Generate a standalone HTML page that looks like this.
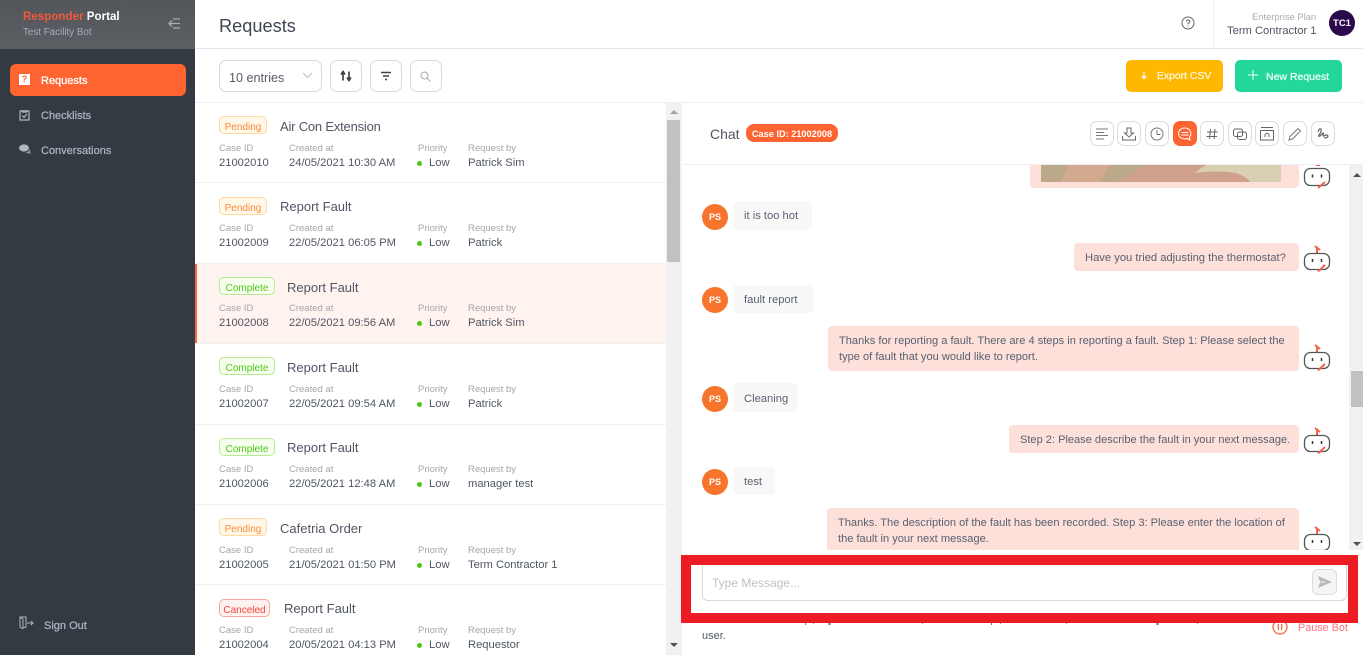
<!DOCTYPE html>
<html><head><meta charset="utf-8"><style>
html,body{margin:0;padding:0;width:1363px;height:655px;overflow:hidden;background:#fff;font-family:"Liberation Sans",sans-serif;color:#4a5160}
.a{position:absolute}
.t{position:absolute;white-space:nowrap;line-height:14px}
.lb{font-size:9.5px;color:#a2a6ad;margin-top:1px}
.v{font-size:11.2px;color:#4f5663;margin-top:1px}
.ti{font-size:13px;color:#4f5663}
.bd{position:absolute;left:219px;height:16px;margin-top:-1px;border-radius:5px;font-size:10px;line-height:21px;text-align:center;box-sizing:content-box}
.p{width:46px;background:#fff7e8;border:1px solid #ffd9a0;color:#fa8c3c}
.c{width:54px;background:#f6ffed;border:1px solid #b7eb8f;color:#52c41a}
.x{width:49px;background:#fff1f0;border:1px solid #ffa39e;color:#f5453d}
.dot{position:absolute;left:417px;width:5px;height:5px;margin-top:1px;border-radius:50%;background:#52c41a}
.bt{position:absolute;box-sizing:border-box;border:1px solid #d9d9d9;border-radius:7px;background:#fff}
.ib{position:absolute;top:121px;width:24px;height:25px;box-sizing:border-box;border:1px solid #dcdcdc;border-radius:7px;background:#fff}
.ib svg{position:absolute;left:3px;top:4px}
.m{position:absolute;box-sizing:border-box;font-size:11.2px;line-height:16px;border-radius:4px;color:#5a6170;white-space:nowrap}
.l{background:#f8f8f8}.r{background:#fde0da}
.av{position:absolute;left:702px;width:26px;height:26px;border-radius:50%;background:#f7742c;color:#fff;font-size:9px;font-weight:bold;line-height:27px;text-align:center}
.nav{font-size:11px;color:#a9b4c0;-webkit-text-stroke:.25px #a9b4c0}
</style></head><body>
<!-- sidebar -->
<div class="a" style="left:0;top:0;width:195px;height:655px;background:#343a42"></div>
<div class="a" style="left:0;top:0;width:195px;height:49px;background:linear-gradient(#53565b,#5b5e63)"></div>
<div class="t" style="left:23px;top:10px;font-size:11.6px;font-weight:bold;color:#f2583a">Responder <span style="color:#fff">Portal</span></div>
<div class="t" style="left:23px;top:26px;font-size:9.8px;color:#a3adb8">Test Facility Bot</div>
<svg class="a" style="left:167px;top:17px" width="14" height="13" fill="none" stroke="#a8adb3" stroke-width="1.3"><path d="M2 6.5H13M5 3.5L2 6.5L5 9.5M6 2H13M6 11H13"/></svg>
<div class="a" style="left:10px;top:64px;width:176px;height:32px;border-radius:6px;background:#fe6431"></div>
<div class="a" style="left:19px;top:74px;width:11px;height:11px;background:#fff;color:#fe6431;font-size:9px;font-weight:bold;line-height:11px;text-align:center">?</div>
<div class="t" style="left:41px;top:74px;font-size:11px;color:#fff;-webkit-text-stroke:.3px #fff">Requests</div>
<svg class="a" style="left:19px;top:109px" width="11" height="12" fill="none" stroke="#b0b6bd" stroke-width="1.2"><path d="M1 2H10V11H1ZM3.5 1V3H7.5V1M3 6.5L5 8.5L8 5"/></svg>
<div class="t nav" style="left:41px;top:109px">Checklists</div>
<svg class="a" style="left:19px;top:144px" width="12" height="11"><ellipse cx="5" cy="4" rx="5" ry="3.6" fill="#b0b6bd"/><path d="M6 8.5Q10 8 11 5L11.5 10Z" fill="#8f959c"/></svg>
<div class="t nav" style="left:41px;top:144px">Conversations</div>
<svg class="a" style="left:19px;top:616px" width="16" height="13" fill="none" stroke="#b0b6bd" stroke-width="1"><path d="M1 1H7V11L3 12.500L1 11ZM1 1L4 3V12M8 7H14M12 5L14 7L12 9"/></svg>
<div class="t nav" style="left:44px;top:619px">Sign Out</div>

<!-- header -->
<div class="t" style="left:219px;top:16px;font-size:18.2px;line-height:20px;color:#414854">Requests</div>
<div class="a" style="left:195px;top:48px;width:1168px;height:1px;background:#e6e6ee"></div>
<div class="a" style="left:1213px;top:0;width:1px;height:48px;background:#eeeef3"></div>
<svg class="a" style="left:1181px;top:16px" width="14" height="14" fill="none" stroke="#666" stroke-width="1"><circle cx="7" cy="7" r="6"/><path d="M5.300 5.500Q5.500 4 7 4Q8.800 4 8.800 5.500Q8.800 6.500 7 7.500V8.300M7 9.500V10.500"/></svg>
<div class="t" style="left:1252px;top:10px;font-size:9.4px;color:#a8abb3">Enterprise Plan</div>
<div class="t" style="left:1227px;top:24px;font-size:11.2px;color:#4f5663">Term Contractor 1</div>
<div class="a" style="left:1329px;top:10px;width:26px;height:26px;border-radius:50%;background:#2a0a4a;color:#fff;font-size:9.500px;font-weight:bold;line-height:27px;text-align:center">TC1</div>

<!-- toolbar -->
<div class="bt" style="left:219px;top:60px;width:103px;height:32px"></div>
<div class="t" style="left:229px;top:71px;font-size:12.6px;color:#555c68">10 entries</div>
<svg class="a" style="left:302px;top:72px" width="11" height="7" fill="none" stroke="#bbb" stroke-width="1"><path d="M1 1L5.500 5.500L10 1"/></svg>
<div class="bt" style="left:330px;top:60px;width:32px;height:32px"></div>
<svg class="a" style="left:340px;top:70px" width="12" height="12" fill="none" stroke="#444" stroke-width="1.700"><path d="M3 10.500V2M1 4.500L3 1.500L5 4.500M9 1.500V10M7 7.500L9 10.500L11 7.500"/></svg>
<div class="bt" style="left:370px;top:60px;width:32px;height:32px"></div>
<svg class="a" style="left:380px;top:71px" width="12" height="10" fill="none" stroke="#444" stroke-width="1.500"><path d="M1 1.500H11M3 5H9M5 8.500H7"/></svg>
<div class="bt" style="left:410px;top:60px;width:32px;height:32px"></div>
<svg class="a" style="left:420px;top:71px" width="11" height="11" fill="none" stroke="#aaa" stroke-width="1"><circle cx="4.500" cy="4.500" r="3.500"/><path d="M7 7L10.500 10.500"/></svg>
<div class="a" style="left:1126px;top:60px;width:97px;height:32px;border-radius:5px;background:#ffb800"></div>
<svg class="a" style="left:1140px;top:71px" width="8" height="9" fill="none" stroke="#fff" stroke-width="1.200"><path d="M4 1V7.500M1.500 5L4 7.500L6.500 5"/></svg>
<div class="t" style="left:1157px;top:70px;font-size:10.4px;color:#fff7dd;-webkit-text-stroke:.25px #fff7dd">Export CSV</div>
<div class="a" style="left:1235px;top:60px;width:107px;height:32px;border-radius:5px;background:#23d69b"></div>
<svg class="a" style="left:1248px;top:70px" width="10" height="10" stroke="#fff" stroke-width="1"><path d="M5 0V10M0 5H10"/></svg>
<div class="t" style="left:1266px;top:70px;font-size:10.5px;color:#eafff7;-webkit-text-stroke:.25px #eafff7">New Request</div>
<div class="a" style="left:195px;top:102px;width:1168px;height:1px;background:#eeeef4"></div>

<!-- list -->
<div class="a" style="left:195px;top:264px;width:471px;height:80px;background:#fff3f0"></div>
<div class="a" style="left:195px;top:264px;width:2px;height:80px;background:#ff6a3c"></div>
<div class="a" style="left:195px;top:182px;width:471px;height:1px;background:#f0f0f0"></div>
<div class="a" style="left:195px;top:263px;width:471px;height:1px;background:#f0f0f0"></div>
<div class="a" style="left:195px;top:343px;width:471px;height:1px;background:#f0f0f0"></div>
<div class="a" style="left:195px;top:424px;width:471px;height:1px;background:#f0f0f0"></div>
<div class="a" style="left:195px;top:504px;width:471px;height:1px;background:#f0f0f0"></div>
<div class="a" style="left:195px;top:584px;width:471px;height:1px;background:#f0f0f0"></div>

<div class="bd p" style="top:117px">Pending</div><div class="t ti" style="left:280px;top:120px;letter-spacing:-.2px">Air Con Extension</div>
<div class="t lb" style="left:219px;top:141px">Case ID</div><div class="t lb" style="left:289px;top:141px">Created at</div><div class="t lb" style="left:418px;top:141px">Priority</div><div class="t lb" style="left:468px;top:141px">Request by</div>
<div class="t v" style="left:219px;top:155px">21002010</div><div class="t v" style="left:289px;top:155px">24/05/2021 10:30 AM</div><div class="dot" style="top:160px"></div><div class="t v" style="left:429px;top:155px">Low</div><div class="t v" style="left:468px;top:155px">Patrick Sim</div>

<div class="bd p" style="top:198px">Pending</div><div class="t ti" style="left:280px;top:200px">Report Fault</div>
<div class="t lb" style="left:219px;top:221px">Case ID</div><div class="t lb" style="left:289px;top:221px">Created at</div><div class="t lb" style="left:418px;top:221px">Priority</div><div class="t lb" style="left:468px;top:221px">Request by</div>
<div class="t v" style="left:219px;top:235px">21002009</div><div class="t v" style="left:289px;top:235px">22/05/2021 06:05 PM</div><div class="dot" style="top:240px"></div><div class="t v" style="left:429px;top:235px">Low</div><div class="t v" style="left:468px;top:235px">Patrick</div>

<div class="bd c" style="top:278px">Complete</div><div class="t ti" style="left:287px;top:281px">Report Fault</div>
<div class="t lb" style="left:219px;top:301px">Case ID</div><div class="t lb" style="left:289px;top:301px">Created at</div><div class="t lb" style="left:418px;top:301px">Priority</div><div class="t lb" style="left:468px;top:301px">Request by</div>
<div class="t v" style="left:219px;top:315px">21002008</div><div class="t v" style="left:289px;top:315px">22/05/2021 09:56 AM</div><div class="dot" style="top:320px"></div><div class="t v" style="left:429px;top:315px">Low</div><div class="t v" style="left:468px;top:315px">Patrick Sim</div>

<div class="bd c" style="top:358px">Complete</div><div class="t ti" style="left:287px;top:361px">Report Fault</div>
<div class="t lb" style="left:219px;top:382px">Case ID</div><div class="t lb" style="left:289px;top:382px">Created at</div><div class="t lb" style="left:418px;top:382px">Priority</div><div class="t lb" style="left:468px;top:382px">Request by</div>
<div class="t v" style="left:219px;top:396px">21002007</div><div class="t v" style="left:289px;top:396px">22/05/2021 09:54 AM</div><div class="dot" style="top:401px"></div><div class="t v" style="left:429px;top:396px">Low</div><div class="t v" style="left:468px;top:396px">Patrick</div>

<div class="bd c" style="top:439px">Complete</div><div class="t ti" style="left:287px;top:441px">Report Fault</div>
<div class="t lb" style="left:219px;top:462px">Case ID</div><div class="t lb" style="left:289px;top:462px">Created at</div><div class="t lb" style="left:418px;top:462px">Priority</div><div class="t lb" style="left:468px;top:462px">Request by</div>
<div class="t v" style="left:219px;top:476px">21002006</div><div class="t v" style="left:289px;top:476px">22/05/2021 12:48 AM</div><div class="dot" style="top:481px"></div><div class="t v" style="left:429px;top:476px">Low</div><div class="t v" style="left:468px;top:476px">manager test</div>

<div class="bd p" style="top:519px">Pending</div><div class="t ti" style="left:280px;top:522px">Cafetria Order</div>
<div class="t lb" style="left:219px;top:543px">Case ID</div><div class="t lb" style="left:289px;top:543px">Created at</div><div class="t lb" style="left:418px;top:543px">Priority</div><div class="t lb" style="left:468px;top:543px">Request by</div>
<div class="t v" style="left:219px;top:557px">21002005</div><div class="t v" style="left:289px;top:557px">21/05/2021 01:50 PM</div><div class="dot" style="top:562px"></div><div class="t v" style="left:429px;top:557px">Low</div><div class="t v" style="left:468px;top:557px">Term Contractor 1</div>

<div class="bd x" style="top:600px">Canceled</div><div class="t ti" style="left:284px;top:602px">Report Fault</div>
<div class="t lb" style="left:219px;top:623px">Case ID</div><div class="t lb" style="left:289px;top:623px">Created at</div><div class="t lb" style="left:418px;top:623px">Priority</div><div class="t lb" style="left:468px;top:623px">Request by</div>
<div class="t v" style="left:219px;top:637px">21002004</div><div class="t v" style="left:289px;top:637px">20/05/2021 04:13 PM</div><div class="dot" style="top:642px"></div><div class="t v" style="left:429px;top:637px">Low</div><div class="t v" style="left:468px;top:637px">Requestor</div>

<!-- list scrollbar -->
<div class="a" style="left:666px;top:103px;width:16px;height:552px;background:#f1f1f1"></div>
<div class="a" style="left:667px;top:120px;width:13px;height:142px;background:#c1c1c1"></div>
<div class="a" style="left:670px;top:110px;width:0;height:0;border-left:4px solid transparent;border-right:4px solid transparent;border-bottom:4px solid #a3a3a3"></div>
<div class="a" style="left:670px;top:643px;width:0;height:0;border-left:4px solid transparent;border-right:4px solid transparent;border-top:4px solid #505050"></div>

<!-- chat header -->
<div class="t" style="left:710px;top:126px;font-size:14px;line-height:16px;color:#4f5663">Chat</div>
<div class="a" style="left:746px;top:124px;width:92px;height:18px;border-radius:8px;background:#fe6431;color:#fff;font-size:9.2px;font-weight:bold;line-height:20px;text-align:center">Case ID: 21002008</div>
<div class="a" style="left:683px;top:164px;width:680px;height:1px;background:#eeeef4"></div>

<div class="ib" style="left:1090px"><svg width="16" height="16" fill="none" stroke="#777" stroke-width="1"><path d="M2 3H14M2 6.500H10M2 9.500H14M2 13H10"/></svg></div>
<div class="ib" style="left:1117px"><svg width="16" height="16" fill="none" stroke="#666" stroke-width="1"><path d="M6 2H10V7H12.500L8 11L3.500 7H6ZM1.500 10V14H14.500V10"/></svg></div>
<div class="ib" style="left:1145px"><svg width="16" height="16" fill="none" stroke="#777" stroke-width="1"><circle cx="8" cy="8" r="6"/><path d="M8 4V8.500H11.500"/></svg></div>
<div class="ib" style="left:1173px;background:#fe6431;border-color:#fe6431"><svg width="16" height="16" fill="none" stroke="#fff" stroke-width="1"><path d="M8 2A6 5.500 0 1 0 10 12.500L13 14L12.500 11A6 5.500 0 0 0 8 2ZM4.500 6.500H11.500M4.500 9H11.500"/></svg></div>
<div class="ib" style="left:1200px"><svg width="16" height="16" fill="none" stroke="#666" stroke-width="1"><path d="M6.500 3L5.500 13M11 3L10 13M3 6H13.500M2.500 10.500H13"/></svg></div>
<div class="ib" style="left:1228px"><svg width="16" height="16" fill="none" stroke="#666" stroke-width="1"><rect x="1.500" y="3" width="9" height="7.500" rx="2"/><rect x="5.500" y="6" width="9" height="7.500" rx="2"/></svg></div>
<div class="ib" style="left:1255px"><svg width="16" height="16" fill="none" stroke="#666" stroke-width="1"><path d="M2 1.500H14M1.500 4.500H14.500V14H1.500ZM6 11V8.500Q8 6 10 8.500V11"/></svg></div>
<div class="ib" style="left:1283px"><svg width="16" height="16" fill="none" stroke="#777" stroke-width="1"><path d="M2 14L3 10.500L11 2.500L13.500 5L5.500 13Z"/></svg></div>
<div class="ib" style="left:1311px"><svg width="16" height="16" fill="none" stroke="#555" stroke-width="1.100"><path d="M3 6Q4 2 6 3Q7 5 4 9Q3 11 5 10L8 7Q9 7 8 9Q8 11 10 9.500Q12 8 13 10Q13 12 9 12"/></svg></div>

<!-- chat messages -->
<div class="m r" style="left:1030px;top:165px;width:269px;height:23px;border-radius:0 0 4px 4px"></div>
<svg class="a" style="left:1041px;top:165px" width="240" height="17"><rect width="240" height="17" fill="#bba98a"/><rect x="150" width="90" height="17" fill="#d9cfb2"/><path d="M20 17L28 0H70L58 17Z" fill="#d3a98f"/><path d="M75 17L105 0H165L153 8Q175 5 195 8Q206 12 209 17Z" fill="#cfa18c"/></svg>

<div class="av" style="top:204px">PS</div>
<div class="m l" style="left:733px;top:201px;width:79px;height:29px;padding:7px 11px">it is too hot</div>

<div class="m r" style="left:1074px;top:243px;width:225px;height:28px;padding:7px 11px">Have you tried adjusting the thermostat?</div>

<div class="av" style="top:287px">PS</div>
<div class="m l" style="left:733px;top:285px;width:81px;height:28px;padding:7px 11px">fault report</div>

<div class="m r" style="left:828px;top:326px;width:471px;height:45px;padding:7px 11px;font-size:11.08px">Thanks for reporting a fault. There are 4 steps in reporting a fault. Step 1: Please select the<br>type of fault that you would like to report.</div>

<div class="av" style="top:386px">PS</div>
<div class="m l" style="left:733px;top:383px;width:65px;height:29px;padding:8px 11px">Cleaning</div>

<div class="m r" style="left:1009px;top:425px;width:290px;height:28px;padding:7px 11px;font-size:11.05px">Step 2: Please describe the fault in your next message.</div>

<div class="av" style="top:469px">PS</div>
<div class="m l" style="left:733px;top:467px;width:42px;height:28px;padding:7px 11px">test</div>

<div class="m r" style="left:827px;top:508px;width:472px;height:42px;padding:7px 11px;border-radius:4px 4px 0 0;overflow:hidden;font-size:11.08px">Thanks. The description of the fault has been recorded. Step 3: Please enter the location of<br>the fault in your next message.</div>

<!-- bots -->
<svg class="a" style="left:1303px;top:165px" width="28" height="24" fill="none"><path d="M13 0H17" stroke="#f0644a" stroke-width="2"/><rect x="1.500" y="3.500" width="25" height="17" rx="6" stroke="#555" stroke-width="1.300" fill="#fff"/><path d="M9.500 9.500V12.500M18.500 9.500V12.500" stroke="#333" stroke-width="1.500"/><path d="M15 23L22 17" stroke="#f0644a" stroke-width="2"/></svg>
<svg class="a" style="left:1303px;top:245px" width="28" height="28" fill="none"><path d="M12 1L17 5M14 3V8" stroke="#f0644a" stroke-width="2"/><rect x="1.500" y="8.500" width="25" height="16" rx="6" stroke="#555" stroke-width="1.300" fill="#fff"/><path d="M9.500 14V17M18.500 14V17" stroke="#333" stroke-width="1.500"/><path d="M15 26.500L22 20" stroke="#f0644a" stroke-width="2"/></svg>
<svg class="a" style="left:1303px;top:344px" width="28" height="28" fill="none"><path d="M12 1L17 5M14 3V8" stroke="#f0644a" stroke-width="2"/><rect x="1.500" y="8.500" width="25" height="16" rx="6" stroke="#555" stroke-width="1.300" fill="#fff"/><path d="M9.500 14V17M18.500 14V17" stroke="#333" stroke-width="1.500"/><path d="M15 26.500L22 20" stroke="#f0644a" stroke-width="2"/></svg>
<svg class="a" style="left:1303px;top:427px" width="28" height="28" fill="none"><path d="M12 1L17 5M14 3V8" stroke="#f0644a" stroke-width="2"/><rect x="1.500" y="8.500" width="25" height="16" rx="6" stroke="#555" stroke-width="1.300" fill="#fff"/><path d="M9.500 14V17M18.500 14V17" stroke="#333" stroke-width="1.500"/><path d="M15 26.500L22 20" stroke="#f0644a" stroke-width="2"/></svg>
<svg class="a" style="left:1303px;top:526px" width="28" height="24" fill="none"><path d="M12 1L17 5M14 3V8" stroke="#f0644a" stroke-width="2"/><rect x="1.500" y="8.500" width="25" height="16" rx="6" stroke="#555" stroke-width="1.300" fill="#fff"/><path d="M9.500 14V17M18.500 14V17" stroke="#333" stroke-width="1.500"/></svg>

<!-- chat scrollbar -->
<div class="a" style="left:1349px;top:165px;width:14px;height:385px;background:#f1f1f1"></div>
<div class="a" style="left:1351px;top:371px;width:12px;height:36px;background:#c1c1c1"></div>
<div class="a" style="left:1353px;top:173px;width:0;height:0;border-left:4px solid transparent;border-right:4px solid transparent;border-bottom:4px solid #505050"></div>
<div class="a" style="left:1353px;top:542px;width:0;height:0;border-left:4px solid transparent;border-right:4px solid transparent;border-top:4px solid #505050"></div>

<!-- bottom -->
<div class="t" style="left:702px;top:629px;font-size:11px;color:#4f5663">user.</div>
<svg class="a" style="left:1272px;top:619px" width="16" height="16" fill="none" stroke="#fe6431" stroke-width="1.300"><circle cx="8" cy="8" r="7"/><path d="M6.300 5V11M9.700 5V11"/></svg>
<div class="t" style="left:1298px;top:621px;font-size:10.8px;color:#ff6f7c">Pause Bot</div>
<!-- descender fragments peeking below the red box -->
<div class="a" style="left:805px;top:623px;width:1px;height:2px;background:#777"></div>
<div class="a" style="left:813px;top:623px;width:1px;height:1px;background:#999"></div>
<div class="a" style="left:828px;top:623px;width:3px;height:2px;background:#999"></div>
<div class="a" style="left:922px;top:623px;width:1px;height:1px;background:#999"></div>
<div class="a" style="left:991px;top:623px;width:1px;height:2px;background:#777"></div>
<div class="a" style="left:1000px;top:623px;width:1px;height:1px;background:#999"></div>
<div class="a" style="left:1066px;top:623px;width:1px;height:1px;background:#999"></div>
<div class="a" style="left:1156px;top:623px;width:3px;height:2px;background:#999"></div>
<div class="a" style="left:1197px;top:623px;width:1px;height:1px;background:#999"></div>

<!-- red box -->
<div class="a" style="left:681px;top:555px;width:677px;height:68px;box-sizing:border-box;border:10px solid #ed1c24;background:#fff"></div>
<div class="a" style="left:702px;top:565px;width:645px;height:36px;box-sizing:border-box;border:1px solid #d9d9d9;border-top:0;border-radius:0 0 6px 6px"></div>
<div class="t" style="left:712px;top:576px;font-size:12px;color:#bfc2c8">Type Message...</div>
<div class="a" style="left:1312px;top:569px;width:25px;height:26px;box-sizing:border-box;border:1px solid #dcdcdc;border-radius:6px;background:#f5f5f5"></div>
<svg class="a" style="left:1318px;top:576px" width="14" height="12"><path d="M0 0L14 6L0 12L2 6.500H7V5.500H2Z" fill="#b8b8b8"/></svg>
</body></html>
